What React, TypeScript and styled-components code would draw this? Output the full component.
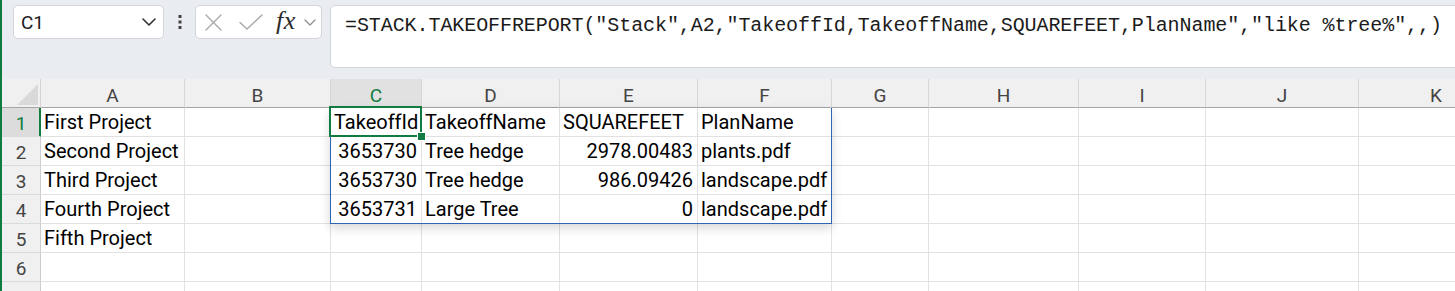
import React from "react";
import styled, { createGlobalStyle } from "styled-components";

const GlobalStyle = createGlobalStyle`
  html, body { margin: 0; padding: 0; background: #ffffff; overflow: hidden; }
  body { font-family: Roboto, "Liberation Sans", Arial, sans-serif; }
`;

const Frame = styled.div`
  width: 1455px;
  height: 291px;
  overflow: hidden;
  box-sizing: border-box;
  border-left: 2px solid #107c41;
  background: #ffffff;
  display: flex;
  flex-direction: column;
`;

const TopBar = styled.div`
  flex: none;
  height: 79px;
  box-sizing: border-box;
  padding: 5px 0 0 11px;
  background: #e9edf1;
  display: flex;
  align-items: flex-start;
`;

const NameBox = styled.div`
  width: 151px;
  height: 34px;
  box-sizing: border-box;
  background: #ffffff;
  border: 1px solid #d3d5d8;
  border-radius: 5px;
  padding: 0 7px;
  display: flex;
  align-items: center;
  justify-content: space-between;
  font-size: 19px;
  color: #1b1b1b;
`;

const MoreButton = styled.div`
  width: 31px;
  height: 34px;
  display: flex;
  align-items: center;
  justify-content: center;
`;

const FuncBox = styled.div`
  width: 127px;
  height: 34px;
  box-sizing: border-box;
  background: #ffffff;
  border: 1px solid #d3d5d8;
  border-radius: 5px;
  padding-left: 9px;
  display: flex;
  align-items: center;
`;

const IconSlot = styled.span<{ $gap: number }>`
  display: flex;
  align-items: center;
  margin-left: ${(p) => p.$gap}px;
`;

const FxLabel = styled.span`
  margin-left: 13px;
  font-family: "Liberation Serif", "Times New Roman", serif;
  font-style: italic;
  font-size: 26px;
  line-height: 26px;
  letter-spacing: 0.5px;
  color: #2b2b2b;
  position: relative;
  top: -1px;
`;

const FormulaBar = styled.div`
  flex: 1;
  height: 63px;
  box-sizing: border-box;
  margin-left: 8px;
  margin-right: -20px;
  background: #ffffff;
  border: 1px solid #d3d5d8;
  border-radius: 5px;
  padding: 8px 0 0 14px;
  font-family: "Liberation Mono", "Courier New", monospace;
  font-size: 20px;
  letter-spacing: -0.08px;
  color: #1b1b1b;
  white-space: nowrap;
  overflow: hidden;
`;

const Sheet = styled.div`
  position: relative;
  display: grid;
  grid-template-columns: 39px 144px 146px 91px 138px 138px 134px 97px 150px 127px 153px 155px;
  grid-auto-rows: 29px;
`;

const Corner = styled.div`
  box-sizing: border-box;
  background: #f0f0f0;
  border-right: 1px solid #d4d4d4;
  border-bottom: 1px solid #a6a6a6;
  display: flex;
  align-items: flex-end;
  justify-content: flex-end;
  padding: 0 2px 2px 0;
`;

const ColHeader = styled.div<{ $active?: boolean }>`
  box-sizing: border-box;
  background: ${(p) => (p.$active ? "#e1e1e1" : "#f0f0f0")};
  border-right: 1px solid #d6d6d6;
  border-bottom: 1px solid #a6a6a6;
  color: ${(p) => (p.$active ? "#107c41" : "#444444")};
  font-size: 19px;
  line-height: 21px;
  padding-top: 6px;
  text-align: center;
`;

const RowHeader = styled.div<{ $active?: boolean }>`
  box-sizing: border-box;
  background: ${(p) => (p.$active ? "#dcdcdc" : "#f0f0f0")};
  border-right: 1px solid ${(p) => (p.$active ? "#107c41" : "#cdcdcd")};
  box-shadow: ${(p) => (p.$active ? "inset -1px 0 0 #107c41" : "none")};
  border-bottom: 1px solid #dadada;
  color: ${(p) => (p.$active ? "#107c41" : "#444444")};
  font-size: 19px;
  line-height: 27px;
  padding-top: 2px;
  text-align: center;
  overflow: hidden;
`;

const Cell = styled.div<{ $align: "left" | "right" }>`
  box-sizing: border-box;
  border-right: 1px solid #e1e1e1;
  border-bottom: 1px solid #e1e1e1;
  padding: 0 4px 0 3px;
  font-size: 20px;
  line-height: 28px;
  color: #000000;
  white-space: nowrap;
  text-align: ${(p) => p.$align};
`;

const SpillRange = styled.div`
  position: absolute;
  left: 328px;
  top: 29px;
  width: 502px;
  height: 116px;
  box-sizing: border-box;
  border: 1px solid #2d64b5;
  border-top: none;
  box-shadow: 0 4px 10px rgba(0, 0, 0, 0.16);
  pointer-events: none;
`;

const ActiveCell = styled.div`
  position: absolute;
  left: 327px;
  top: 27px;
  width: 93px;
  height: 31px;
  box-sizing: border-box;
  border: 2px solid #107c41;
  pointer-events: none;
`;

const FillHandle = styled.div`
  position: absolute;
  right: -5px;
  bottom: -5px;
  width: 7px;
  height: 7px;
  box-sizing: border-box;
  background: #107c41;
  outline: 1px solid #ffffff;
`;

const Chevron = ({ w, h, color, sw }: { w: number; h: number; color: string; sw: number }) => (
  <svg width={w} height={h} viewBox={`0 0 ${w} ${h}`} fill="none">
    <polyline
      points={`1,1 ${w / 2},${h - 1} ${w - 1},1`}
      stroke={color}
      strokeWidth={sw}
      strokeLinecap="round"
      strokeLinejoin="round"
    />
  </svg>
);

const DotsIcon = () => (
  <svg width="6" height="16" viewBox="0 0 6 16">
    <rect x="1.5" y="1" width="3" height="3" fill="#424242" />
    <rect x="1.5" y="6.5" width="3" height="3" fill="#424242" />
    <rect x="1.5" y="12" width="3" height="3" fill="#424242" />
  </svg>
);

const CancelIcon = () => (
  <svg width="17" height="17" viewBox="0 0 17 17" fill="none">
    <path d="M1 1 L16 16 M16 1 L1 16" stroke="#a8a8a8" strokeWidth="1.4" strokeLinecap="round" />
  </svg>
);

const EnterIcon = () => (
  <svg width="24" height="16" viewBox="0 0 24 16" fill="none">
    <polyline points="1,8.5 8,15 23,1" stroke="#a8a8a8" strokeWidth="1.4" strokeLinecap="round" strokeLinejoin="round" />
  </svg>
);

const SelectAll = () => (
  <svg width="21" height="21" viewBox="0 0 21 21">
    <polygon points="21,0 21,21 0,21" fill="#d9d9d9" />
  </svg>
);

type Val = { t: string; r?: boolean };

const COLS = ["A", "B", "C", "D", "E", "F", "G", "H", "I", "J", "K"];

const ROWS: Val[][] = [
  [{ t: "First Project" }, { t: "" }, { t: "TakeoffId" }, { t: "TakeoffName" }, { t: "SQUAREFEET" }, { t: "PlanName" }],
  [{ t: "Second Project" }, { t: "" }, { t: "3653730", r: true }, { t: "Tree hedge" }, { t: "2978.00483", r: true }, { t: "plants.pdf" }],
  [{ t: "Third Project" }, { t: "" }, { t: "3653730", r: true }, { t: "Tree hedge" }, { t: "986.09426", r: true }, { t: "landscape.pdf" }],
  [{ t: "Fourth Project" }, { t: "" }, { t: "3653731", r: true }, { t: "Large Tree" }, { t: "0", r: true }, { t: "landscape.pdf" }],
  [{ t: "Fifth Project" }],
  [],
  [],
];

const FORMULA =
  '=STACK.TAKEOFFREPORT("Stack",A2,"TakeoffId,TakeoffName,SQUAREFEET,PlanName","like %tree%",,)';

export default function App() {
  return (
    <>
      <GlobalStyle />
      <Frame>
        <TopBar>
          <NameBox>
            <span>C1</span>
            <Chevron w={14} h={8} color="#333333" sw={1.6} />
          </NameBox>
          <MoreButton>
            <DotsIcon />
          </MoreButton>
          <FuncBox>
            <CancelIcon />
            <IconSlot $gap={17}>
              <EnterIcon />
            </IconSlot>
            <FxLabel>fx</FxLabel>
            <IconSlot $gap={8}>
              <Chevron w={12} h={7} color="#8f8f8f" sw={1.3} />
            </IconSlot>
          </FuncBox>
          <FormulaBar>{FORMULA}</FormulaBar>
        </TopBar>
        <Sheet>
          <Corner>
            <SelectAll />
          </Corner>
          {COLS.map((c) => (
            <ColHeader key={c} $active={c === "C"}>
              {c}
            </ColHeader>
          ))}
          {ROWS.map((row, ri) => (
            <React.Fragment key={ri}>
              <RowHeader $active={ri === 0}>{ri + 1}</RowHeader>
              {COLS.map((c, ci) => {
                const v = row[ci];
                return (
                  <Cell key={c} $align={v?.r ? "right" : "left"}>
                    {v?.t ?? ""}
                  </Cell>
                );
              })}
            </React.Fragment>
          ))}
          <SpillRange />
          <ActiveCell>
            <FillHandle />
          </ActiveCell>
        </Sheet>
      </Frame>
    </>
  );
}
